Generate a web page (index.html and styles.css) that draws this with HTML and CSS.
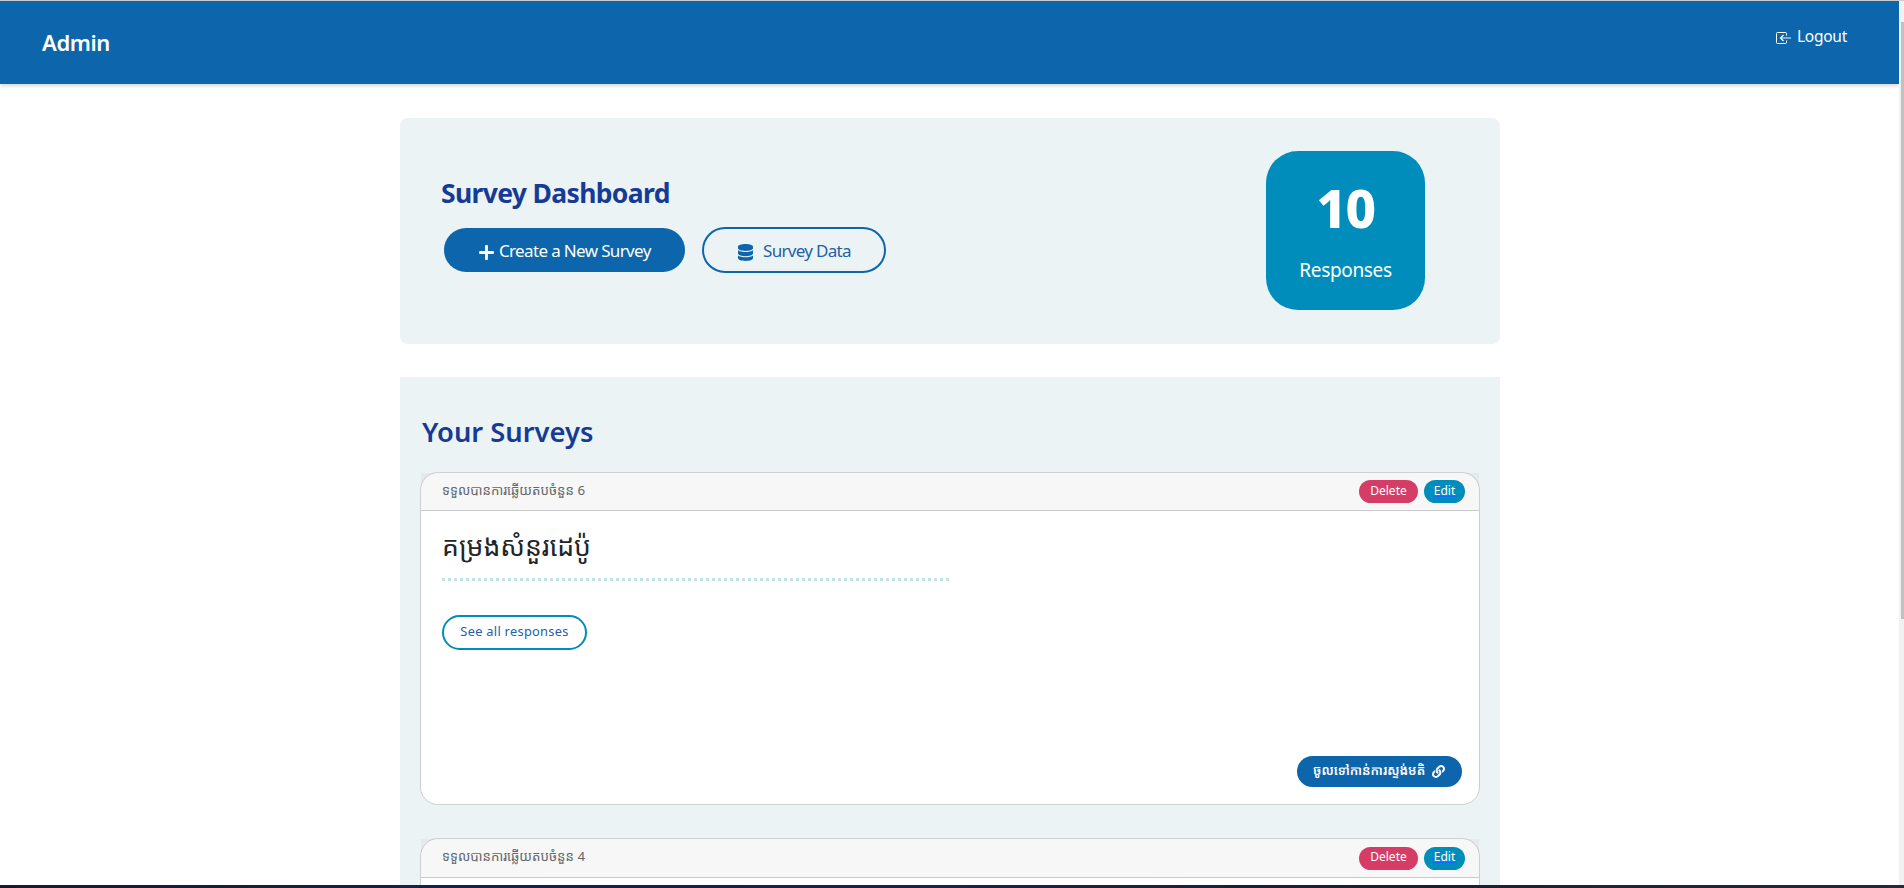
FILE: index.html
```html
<!DOCTYPE html>
<html lang="en">
<head>
<meta charset="utf-8">
<title>Admin</title>
<link rel="stylesheet" href="styles.css">
</head>
<body>
<div class="viewport">
  <div class="page">
    <header class="navbar">
      <span class="brand">Admin</span>
      <a class="logout"><svg class="logout-icon" viewBox="0 0 15 12" fill="none" stroke="#fff"><path d="M10.500 3.500V1.500Q10.500 .5 9.500 .5H1.500Q.5 .5 .5 1.500V10.500Q.5 11.500 1.500 11.500H9.500Q10.500 11.500 10.500 10.500V8.500"/><path d="M7.500 3 4.500 6 7.500 9" stroke-width="1.200"/><path d="M5 6H15" stroke-width="1.500" opacity=".65"/></svg><span>Logout</span></a>
    </header>
    <main class="content">
      <section class="dashboard">
        <div class="intro">
          <h1 class="dash-title">Survey Dashboard</h1>
          <div class="actions">
            <a class="btn create"><svg class="plus" viewBox="0 0 15 15"><path d="M7.500 1.200V13.800M1.200 7.500H13.800" stroke="#fff" stroke-width="2.800" stroke-linecap="round"/></svg><span>Create a New Survey</span></a>
            <a class="btn data"><svg class="db" viewBox="0 0 448 512" preserveAspectRatio="none"><path fill="#0d66ab" d="M448 80v48c0 44.200-100.300 80-224 80S0 172.200 0 128V80C0 35.800 100.300 0 224 0s224 35.800 224 80zM393.200 214.700c20.800-7.400 39.900-16.900 54.800-28.600V288c0 44.200-100.300 80-224 80S0 332.200 0 288V186.100c14.900 11.800 34 21.200 54.800 28.600C99.700 230.700 159.500 240 224 240s124.300-9.300 169.200-25.300zM0 346.100c14.900 11.800 34 21.200 54.800 28.600C99.700 390.700 159.500 400 224 400s124.300-9.300 169.200-25.300c20.800-7.400 39.900-16.900 54.800-28.600V432c0 44.200-100.300 80-224 80S0 476.200 0 432V346.100z"/></svg><span>Survey Data</span></a>
          </div>
        </div>
        <div class="counter"><strong class="count">10</strong><span class="count-label">Responses</span></div>
      </section>
      <section class="surveys">
        <h2 class="surveys-title">Your Surveys</h2>
        <article class="card">
          <div class="card-header">
            <span class="received">ទទួលបានការឆ្លើយតបចំនួន 6</span>
            <div class="tools"><a class="pill delete">Delete</a><a class="pill edit">Edit</a></div>
          </div>
          <div class="card-body">
            <h3 class="survey-name">គម្រងសំនួរដេប៉ូ</h3>
            <div class="dots"></div>
            <a class="see-all">See all responses</a>
            <a class="open-link"><span>ចូលទៅកាន់ការស្ទង់មតិ</span><svg class="link" viewBox="0 0 512 512"><path fill="#fff" d="M326.612 185.391c59.747 59.809 58.927 155.698.36 214.590-.110.120-.240.250-.360.370l-67.200 67.200c-59.270 59.270-155.699 59.262-214.960 0-59.270-59.260-59.270-155.700 0-214.960l37.106-37.106c9.840-9.840 26.786-3.300 27.294 10.606.648 17.722 3.826 35.527 9.690 52.721 1.986 5.822.567 12.262-3.783 16.612l-13.087 13.087c-28.026 28.026-28.905 73.660-1.155 101.960 28.024 28.579 74.086 28.749 102.325.510l67.200-67.190c28.191-28.191 28.073-73.757 0-101.830-3.701-3.694-7.429-6.564-10.341-8.569a16.037 16.037 0 0 1-6.947-12.606c-.396-10.567 3.348-21.456 11.698-29.806l21.054-21.055c5.521-5.521 14.182-6.199 20.584-1.731a152.482 152.482 0 0 1 20.522 17.197zM467.547 44.449c-59.261-59.262-155.690-59.270-214.960 0l-67.200 67.200c-.120.120-.250.250-.360.370-58.566 58.892-59.387 154.781.360 214.590a152.454 152.454 0 0 0 20.521 17.196c6.402 4.468 15.064 3.789 20.584-1.731l21.054-21.055c8.350-8.350 12.094-19.239 11.698-29.806a16.037 16.037 0 0 0-6.947-12.606c-2.912-2.005-6.640-4.875-10.341-8.569-28.073-28.073-28.191-73.639 0-101.830l67.200-67.190c28.239-28.239 74.300-28.069 102.325.510 27.750 28.300 26.872 73.934-1.155 101.960l-13.087 13.087c-4.350 4.350-5.769 10.790-3.783 16.612 5.864 17.194 9.042 34.999 9.690 52.721.509 13.906 17.454 20.446 27.294 10.606l37.106-37.106c59.271-59.259 59.271-155.699.001-214.959z"/></svg></a>
          </div>
        </article>
        <article class="card">
          <div class="card-header second">
            <span class="received">ទទួលបានការឆ្លើយតបចំនួន 4</span>
            <div class="tools"><a class="pill delete">Delete</a><a class="pill edit">Edit</a></div>
          </div>
          <div class="card-body"></div>
        </article>
      </section>
    </main>
  </div>
  <div class="scrollbar"><div class="thumb"></div></div>
</div>
<div class="taskbar"></div>
</body>
</html>
```

FILE: styles.css
```css
* { box-sizing: border-box; }
body {
  margin: 0;
  height: 888px;
  overflow: hidden;
  background: #fff;
  color: #212529;
  font-family: "Noto Sans", "Noto Sans Khmer", sans-serif;
}
h1, h2, h3 { margin: 0; }
.viewport { display: flex; height: 885px; border-top: 1px solid #c9cccf; overflow: hidden; }
.page { width: 1899px; height: 884px; overflow: hidden; }
.navbar {
  height: 83px;
  padding: 0 52px 0 42px;
  display: flex;
  justify-content: space-between;
  background: #0d66ab;
  color: #fff;
  box-shadow: 0 2px 4px rgba(0, 0, 0, .16);
}
.brand { margin-top: 26px; font-size: 22px; line-height: 30px; font-weight: 600; letter-spacing: -.4px; }
.logout { display: flex; margin-top: 24px; height: 22px; gap: 6px; font-size: 15.500px; line-height: 22px; letter-spacing: -.25px; }
.logout-icon { width: 15px; height: 12px; margin-top: 7px; }
.content { width: 1100px; margin: 34px auto 0 400px; }
.dashboard {
  height: 226px;
  padding: 33px 75px 0 41px;
  display: flex;
  justify-content: space-between;
  background: #ebf3f5;
  border-radius: 8px;
}
.intro { padding-top: 22px; }
.dash-title { font-size: 26.500px; line-height: 40px; font-weight: 700; letter-spacing: -.65px; color: #173b95; white-space: nowrap; }
.actions { display: flex; align-items: center; gap: 17px; margin: 14px 0 0 3px; }
.btn { display: flex; border-radius: 23px; font-size: 17px; white-space: nowrap; }
.create { width: 241px; height: 44px; padding-left: 35px; gap: 5px; line-height: 46px; letter-spacing: -.65px; background: #0d66ab; color: #fff; }
.plus { width: 15px; height: 15px; margin-top: 17px; }
.data { width: 184px; height: 46px; padding-left: 34px; gap: 10px; line-height: 43px; letter-spacing: -.7px; border: 2px solid #0d66ab; color: #2460a5; }
.db { width: 15px; height: 17px; margin-top: 15px; }
.counter {
  width: 159px;
  height: 159px;
  display: flex;
  flex-direction: column;
  align-items: center;
  border-radius: 32px;
  background: #008dbb;
  color: #fff;
}
.count { margin-top: 26px; font-size: 53px; line-height: 62px; font-weight: 800; letter-spacing: -1.500px; }
.count-label { margin-top: 16px; font-size: 19px; line-height: 30px; letter-spacing: -.35px; }
.surveys { height: 600px; margin-top: 33px; padding: 35px 20px 0; background: #ebf3f5; }
.surveys-title { height: 60px; padding-left: 2px; font-size: 27.300px; line-height: 40px; font-weight: 600; color: #173b95; white-space: nowrap; }
.card { height: 333px; margin-bottom: 33px; border: 1px solid #cecfd0; border-radius: 18px; background: #fff; }
.card-header {
  height: 38px;
  padding: 0 14px 0 21px;
  display: flex;
  justify-content: space-between;
  border-bottom: 1px solid #c9cacb;
  background: rgba(0, 0, 0, .03);
}
.received { font-size: 13.300px; line-height: 35px; color: #62676b; white-space: nowrap; }
.tools { display: flex; gap: 6px; padding-top: 7px; }
.second { height: 39px; }
.second .tools { padding-top: 8px; }
.second .pill { line-height: 20px; }
.pill { height: 23px; border-radius: 12px; font-size: 12px; line-height: 21px; text-align: center; color: #fff; }
.delete { width: 59px; background: #d53d67; }
.edit { width: 41px; background: #008dbb; text-decoration: underline #0d6efd; }
.card-body { display: flex; flex-direction: column; align-items: flex-start; padding: 17px 17px 0 21px; }
.survey-name { height: 50px; font-size: 26.600px; line-height: 36px; font-weight: 400; white-space: nowrap; }
.dots { width: 508px; height: 3px; background: repeating-linear-gradient(90deg, #bfe2eb 0 3px, transparent 3px 6px); }
.see-all {
  width: 145px;
  height: 35px;
  margin-top: 34px;
  border: 2px solid #008dbb;
  border-radius: 18px;
  text-align: center;
  font-size: 12.800px;
  line-height: 28px;
  letter-spacing: .3px;
  color: #2460a5;
  white-space: nowrap;
}
.open-link {
  align-self: flex-end;
  display: flex;
  justify-content: space-between;
  width: 165px;
  height: 31px;
  margin-top: 106px;
  padding: 0 17px 0 16px;
  border-radius: 16px;
  background: #0d66ab;
  color: #fff;
  font-size: 12.900px;
  line-height: 28px;
  font-weight: 600;
  white-space: nowrap;
}
.link { width: 13px; height: 13px; margin-top: 9px; }
.scrollbar { width: 5px; padding: 21px 0 0 2px; background: #f1f1f1; }
.thumb { height: 597px; background: #c1c1c1; }
.taskbar { height: 3px; background: linear-gradient(90deg, #181a2b, #14204f 22%, #182150 50%, #1b202d 75%, #232b38); }
```
